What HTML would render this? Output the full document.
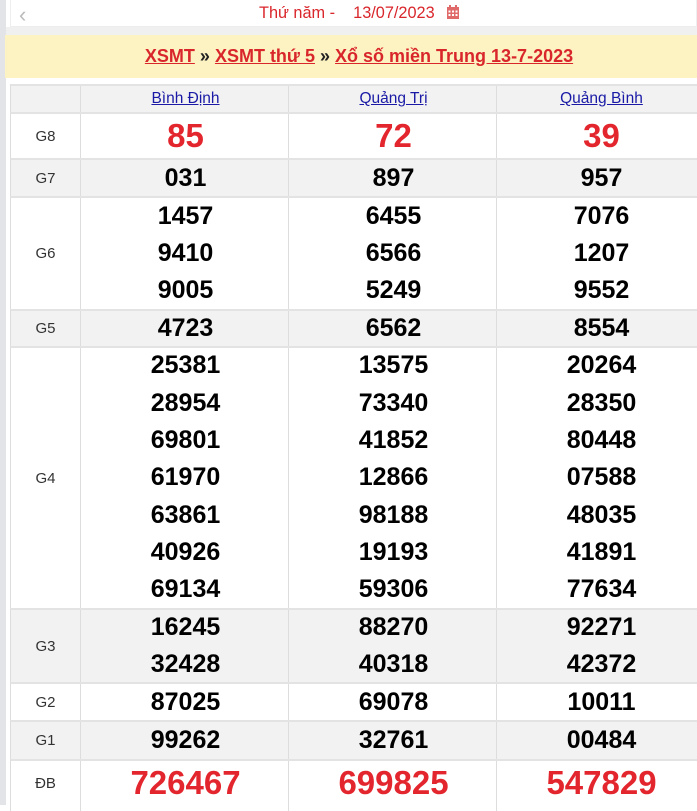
<!DOCTYPE html>
<html><head><meta charset="utf-8"><style>
*{margin:0;padding:0;box-sizing:border-box}
body{width:697px;height:805px;overflow:hidden;background:#fff;font-family:"Liberation Sans",Arial,sans-serif;position:relative}
.strip{position:absolute;left:0;top:0;width:6px;height:805px;background:#e2e4e7}
.top{position:absolute;left:10px;top:0;width:687px;height:27px;background:#fff;border:1px solid #eee;border-top:none}
.gap{position:absolute;left:6px;top:27px;width:691px;height:8px;background:#f0f0f0}
.arr{position:absolute;top:2px;color:#bbb;font-size:22px}
.date{position:absolute;top:4px;left:248px;color:#d9262b;font-size:16.3px;white-space:pre}
.yel{position:absolute;left:5px;top:35px;width:692px;height:43px;background:#fcf2c2;text-align:center;font-size:18px;font-weight:bold;line-height:43px;color:#d9262b;padding-left:16px}
.yel a{color:#d9262b;text-decoration:underline}
.yel span{color:#222}
.row{position:absolute;left:10px;width:700px;border-top:2px solid #e3e3e3;border-left:1px solid #ddd;display:flex;background:#fff}
.g{background:#f2f2f2}
.row>div{flex-shrink:0;border-right:1px solid #ddd;display:flex;flex-direction:column;justify-content:center;align-items:center;font-weight:bold;font-size:25px;color:#000;height:100%}
.row>div.l{width:70px;font-weight:normal;font-size:15px;color:#333}
.row>div.c{width:208px;padding-left:2px}
.h>div{font-size:15.5px!important;font-weight:normal!important}
.h a{color:#1a1aa6;text-decoration:underline}
.n div{height:37.3px;line-height:37.3px}
.r{color:#e3262d!important;font-size:33px!important}
</style></head><body>
<div class="strip"></div>
<div class="top"><span class="arr" style="left:8px">‹</span><span class="date">Thứ năm -    13/07/2023</span>
<svg style="position:absolute;left:436px;top:5px" width="12" height="14" viewBox="0 0 12 14"><rect x="0" y="2" width="12" height="12" fill="#e06a6a"/><rect x="2" y="0" width="2" height="3" fill="#e06a6a"/><rect x="8" y="0" width="2" height="3" fill="#e06a6a"/><g fill="#fff"><rect x="1.5" y="5.5" width="2" height="2"/><rect x="5" y="5.5" width="2" height="2"/><rect x="8.5" y="5.5" width="2" height="2"/><rect x="1.5" y="9" width="2" height="2"/><rect x="5" y="9" width="2" height="2"/><rect x="8.5" y="9" width="2" height="2"/></g></svg></div>
<div class="gap"></div>
<div class="yel"><a>XSMT</a> <span>»</span> <a>XSMT thứ 5</a> <span>»</span> <a>Xổ số miền Trung 13-7-2023</a></div>

<div class="row h g" style="top:84px;height:28px"><div class="l"></div><div class="c"><a>Bình Định</a></div><div class="c"><a>Quảng Trị</a></div><div class="c"><a>Quảng Bình</a></div></div>
<div class="row" style="top:112px;height:46px"><div class="l">G8</div><div class="c r">85</div><div class="c r">72</div><div class="c r">39</div></div>
<div class="row g" style="top:158px;height:38px"><div class="l">G7</div><div class="c">031</div><div class="c">897</div><div class="c">957</div></div>
<div class="row" style="top:196px;height:113px"><div class="l">G6</div><div class="c n"><div>1457</div><div>9410</div><div>9005</div></div><div class="c n"><div>6455</div><div>6566</div><div>5249</div></div><div class="c n"><div>7076</div><div>1207</div><div>9552</div></div></div>
<div class="row g" style="top:309px;height:37px"><div class="l">G5</div><div class="c">4723</div><div class="c">6562</div><div class="c">8554</div></div>
<div class="row" style="top:346px;height:262px"><div class="l">G4</div><div class="c n"><div>25381</div><div>28954</div><div>69801</div><div>61970</div><div>63861</div><div>40926</div><div>69134</div></div><div class="c n"><div>13575</div><div>73340</div><div>41852</div><div>12866</div><div>98188</div><div>19193</div><div>59306</div></div><div class="c n"><div>20264</div><div>28350</div><div>80448</div><div>07588</div><div>48035</div><div>41891</div><div>77634</div></div></div>
<div class="row g" style="top:608px;height:74px"><div class="l">G3</div><div class="c n"><div>16245</div><div>32428</div></div><div class="c n"><div>88270</div><div>40318</div></div><div class="c n"><div>92271</div><div>42372</div></div></div>
<div class="row" style="top:682px;height:38px"><div class="l">G2</div><div class="c">87025</div><div class="c">69078</div><div class="c">10011</div></div>
<div class="row g" style="top:720px;height:39px"><div class="l">G1</div><div class="c">99262</div><div class="c">32761</div><div class="c">00484</div></div>
<div class="row" style="top:759px;height:52px"><div class="l" style="padding-bottom:6px">ĐB</div><div class="c r" style="padding-bottom:6px">726467</div><div class="c r" style="padding-bottom:6px">699825</div><div class="c r" style="padding-bottom:6px">547829</div></div>
</body></html>
